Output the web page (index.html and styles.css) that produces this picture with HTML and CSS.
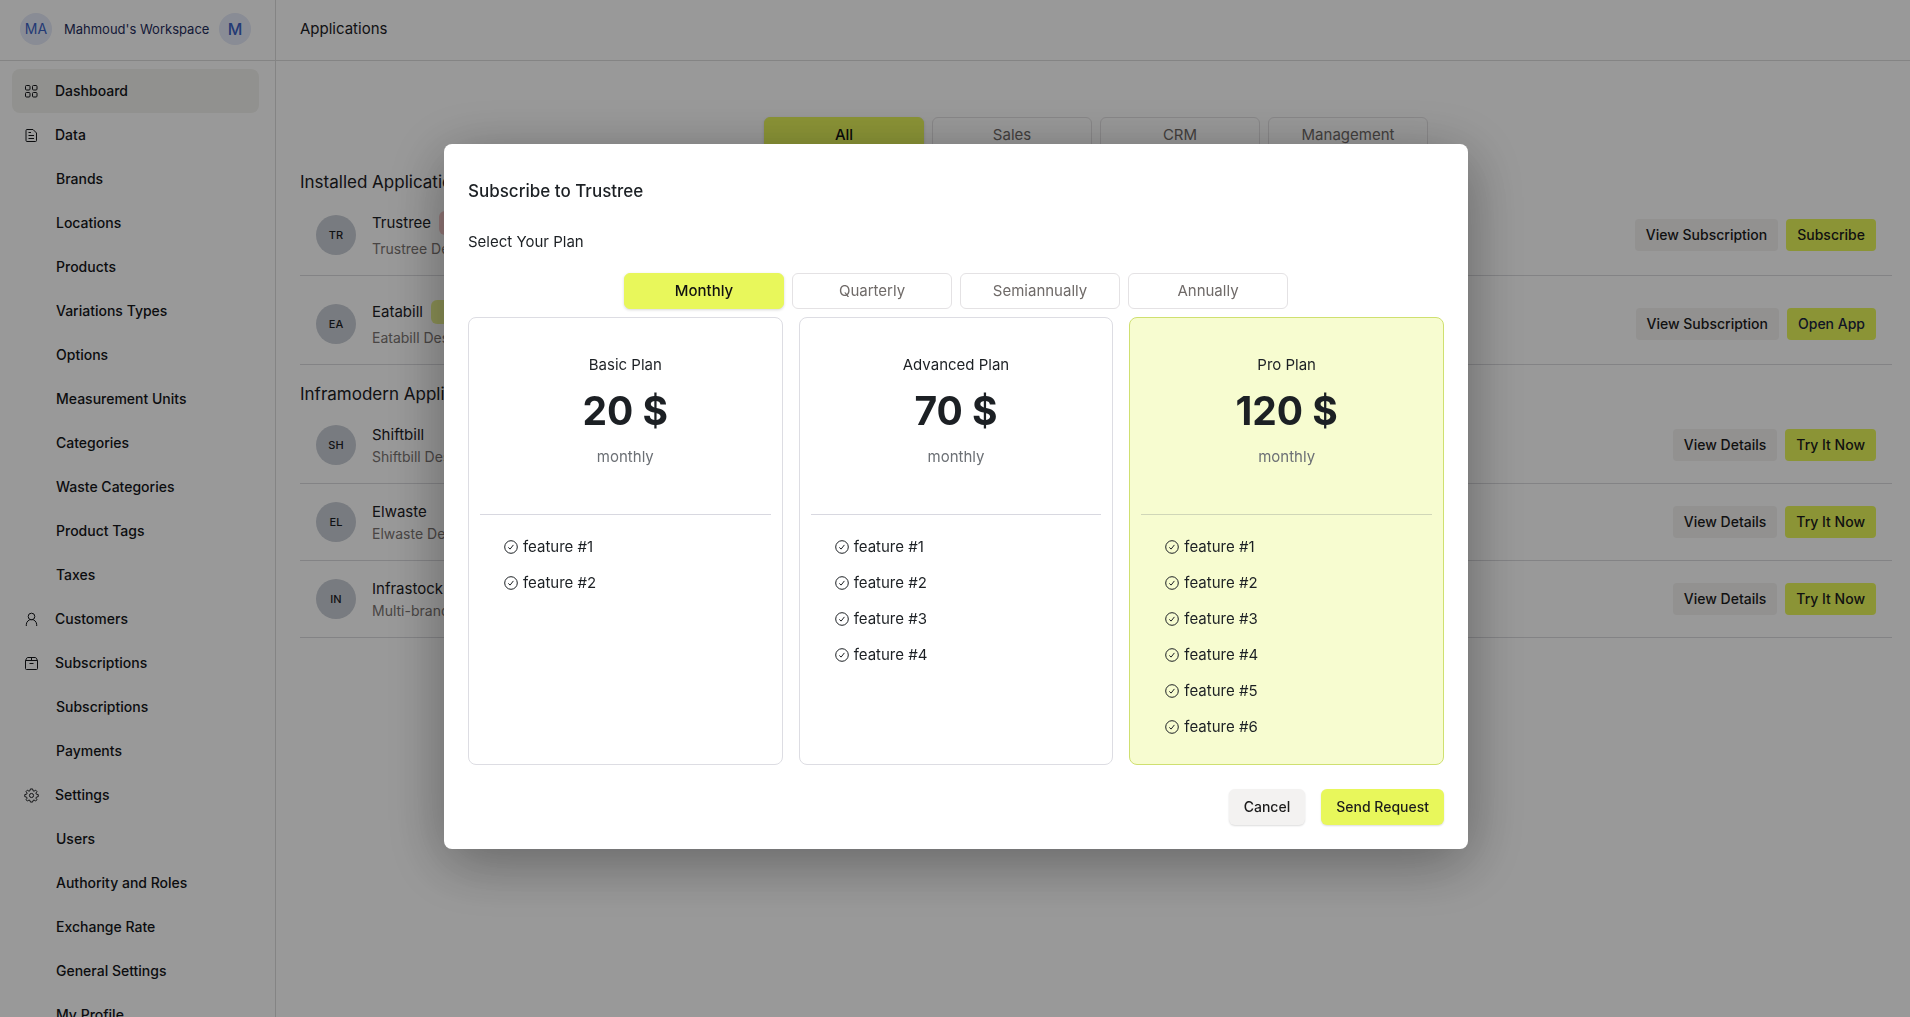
FILE: index.html
```html
<!DOCTYPE html>
<html lang="en">
<head>
<meta charset="utf-8">
<title>Applications</title>
<link rel="stylesheet" href="styles.css">
</head>
<body>
<svg class="sprite" aria-hidden="true">
  <symbol id="check" viewBox="0 0 14 14"><circle cx="7" cy="7" r="6.3"/><path d="M4.3 7.4l1.8 1.7 3.3-4.2"/></symbol>
</svg>
<div class="app">
  <aside class="sidebar">
    <div class="workspace">
      <span class="chip">MA</span>
      <span class="workspace-name">Mahmoud's Workspace</span>
      <span class="chip chip-large">M</span>
    </div>
    <nav class="menu">
      <a href="#" class="item active"><svg viewBox="0 0 15 15"><rect x="1.500" y="1.500" width="4.500" height="4.500" rx="1"/><rect x="8.500" y="1.500" width="4.500" height="4.500" rx="1"/><rect x="1.500" y="8.500" width="4.500" height="4.500" rx="1"/><rect x="8.500" y="8.500" width="4.500" height="4.500" rx="1"/></svg>Dashboard</a>
      <a href="#" class="item"><svg viewBox="0 0 15 15"><path d="M3 1.500h6L12.500 5v7.500a1 1 0 0 1-1 1H3a1 1 0 0 1-1-1v-10a1 1 0 0 1 1-1zM4.500 4.500H7M4.500 7.500H10M4.500 10.500H10"/></svg>Data</a>
      <a href="#" class="item child">Brands</a>
      <a href="#" class="item child">Locations</a>
      <a href="#" class="item child">Products</a>
      <a href="#" class="item child">Variations Types</a>
      <a href="#" class="item child">Options</a>
      <a href="#" class="item child">Measurement Units</a>
      <a href="#" class="item child">Categories</a>
      <a href="#" class="item child">Waste Categories</a>
      <a href="#" class="item child">Product Tags</a>
      <a href="#" class="item child">Taxes</a>
      <a href="#" class="item"><svg viewBox="0 0 15 15"><circle cx="7.500" cy="4.500" r="3.300"/><path d="M2.300 14v-1.300a5.200 5.200 0 0 1 10.400 0V14"/></svg>Customers</a>
      <a href="#" class="item"><svg viewBox="0 0 15 15"><path d="M1.500 4.500v8a1 1 0 0 0 1 1h10a1 1 0 0 0 1-1v-8L12.200 2.100a1 1 0 0 0-.9-.6H3.700a1 1 0 0 0-.9.600zM1.500 4.500h12M7.500 1.500v3M5.500 7.500h4"/></svg>Subscriptions</a>
      <a href="#" class="item child">Subscriptions</a>
      <a href="#" class="item child">Payments</a>
      <a href="#" class="item"><svg viewBox="0 0 16 16"><circle cx="8" cy="8" r="2.200"/><path d="M6.800 1h2.400l.4 1.900 1.100.5 1.700-1.100 1.400 1.400-1.100 1.800.5 1.100 2 .4v2.200l-2 .5-.5 1.100 1.100 1.700-1.400 1.400-1.700-1.100-1.100.5L9.200 15H6.800l-.4-1.700-1.100-.5-1.700 1.100-1.400-1.400 1.100-1.700-.5-1.100-2-.5V7l2-.4.5-1.100-1.100-1.800 1.400-1.400 1.700 1.100 1.100-.5z"/></svg>Settings</a>
      <a href="#" class="item child">Users</a>
      <a href="#" class="item child">Authority and Roles</a>
      <a href="#" class="item child">Exchange Rate</a>
      <a href="#" class="item child">General Settings</a>
      <a href="#" class="item child">My Profile</a>
    </nav>
  </aside>
  <div class="page">
    <header class="topbar"><h1>Applications</h1></header>
    <main class="content">
      <div class="tabs">
        <button class="tab selected">All</button>
        <button class="tab">Sales</button>
        <button class="tab">CRM</button>
        <button class="tab">Management</button>
      </div>
      <section class="group installed">
        <h2>Installed Applications</h2>
        <article class="row">
          <span class="avatar">TR</span>
          <div class="info"><h3>Trustree <span class="badge danger"></span></h3><p>Trustree Description</p></div>
          <button class="btn small">View Subscription</button>
          <button class="btn small lime">Subscribe</button>
        </article>
        <article class="row">
          <span class="avatar">EA</span>
          <div class="info"><h3>Eatabill <span class="badge"></span></h3><p>Eatabill Description</p></div>
          <button class="btn small">View Subscription</button>
          <a href="#" class="btn small lime open">Open App</a>
        </article>
      </section>
      <section class="group">
        <h2>Inframodern Applications</h2>
        <article class="row">
          <span class="avatar">SH</span>
          <div class="info"><h3>Shiftbill</h3><p>Shiftbill Description</p></div>
          <button class="btn small">View Details</button>
          <button class="btn small lime">Try It Now</button>
        </article>
        <article class="row">
          <span class="avatar">EL</span>
          <div class="info"><h3>Elwaste</h3><p>Elwaste Description</p></div>
          <button class="btn small">View Details</button>
          <button class="btn small lime">Try It Now</button>
        </article>
        <article class="row">
          <span class="avatar">IN</span>
          <div class="info"><h3>Infrastock</h3><p>Multi-brand</p></div>
          <button class="btn small">View Details</button>
          <button class="btn small lime">Try It Now</button>
        </article>
      </section>
    </main>
  </div>
</div>
<div class="overlay">
  <div class="modal" role="dialog" aria-modal="true" aria-labelledby="modal-title">
    <h2 id="modal-title">Subscribe to Trustree</h2>
    <p class="lead">Select Your Plan</p>
    <div class="tabs">
      <button class="tab selected">Monthly</button>
      <button class="tab">Quarterly</button>
      <button class="tab">Semiannually</button>
      <button class="tab">Annually</button>
    </div>
    <div class="plans">
      <section class="plan">
        <div class="plan-head"><h3>Basic Plan</h3><strong>20 $</strong><span>monthly</span></div>
        <ul>
          <li><svg><use href="#check"/></svg>feature #1</li>
          <li><svg><use href="#check"/></svg>feature #2</li>
        </ul>
      </section>
      <section class="plan">
        <div class="plan-head"><h3>Advanced Plan</h3><strong>70 $</strong><span>monthly</span></div>
        <ul>
          <li><svg><use href="#check"/></svg>feature #1</li>
          <li><svg><use href="#check"/></svg>feature #2</li>
          <li><svg><use href="#check"/></svg>feature #3</li>
          <li><svg><use href="#check"/></svg>feature #4</li>
        </ul>
      </section>
      <section class="plan chosen">
        <div class="plan-head"><h3>Pro Plan</h3><strong>120 $</strong><span>monthly</span></div>
        <ul>
          <li><svg><use href="#check"/></svg>feature #1</li>
          <li><svg><use href="#check"/></svg>feature #2</li>
          <li><svg><use href="#check"/></svg>feature #3</li>
          <li><svg><use href="#check"/></svg>feature #4</li>
          <li><svg><use href="#check"/></svg>feature #5</li>
          <li><svg><use href="#check"/></svg>feature #6</li>
        </ul>
      </section>
    </div>
    <div class="actions">
      <button class="btn raised">Cancel</button>
      <button class="btn raised lime">Send Request</button>
    </div>
  </div>
</div>
</body>
</html>
```
FILE: styles.css
```css
* { box-sizing: border-box; }
body, h1, h2, h3, p, ul { margin: 0; padding: 0; }
body {
  font-family: Inter, "Liberation Sans", sans-serif;
  font-size: 15px;
  line-height: 24px;
  color: #1c2024;
  background: #fff;
  overflow: hidden;
}
h1, h2, h3 { font-weight: 400; }
h1, h3 { font-size: 15px; }
button { font: inherit; cursor: pointer; }
a { color: inherit; text-decoration: none; }
svg { fill: none; stroke: currentColor; flex: none; }
.sprite { display: none; }

.app { display: flex; height: 100vh; }
.sidebar { flex: none; width: 276px; border-right: 1px solid #dcdcdc; overflow: hidden; }
.workspace {
  display: flex;
  align-items: center;
  height: 61px;
  padding: 0 0 3px 20px;
  border-bottom: 1px solid #dcdcdc;
  font-size: 14px;
  color: #1f2d5c;
}
.workspace-name { width: 155px; padding-left: 12px; font-size: 13px; white-space: nowrap; }
.chip {
  flex: none;
  width: 32px;
  height: 32px;
  border-radius: 50%;
  background: #e4e9f8;
  color: #3b62c4;
  line-height: 32px;
  text-align: center;
}
.chip-large { margin-left: 12px; font-size: 16px; font-weight: 500; }

.menu { padding: 8px 16px 0 12px; }
.item {
  display: flex;
  align-items: center;
  gap: 16px;
  height: 44px;
  padding-left: 12px;
  border-radius: 8px;
  font-size: 14px;
  font-weight: 500;
  color: #14161a;
}
.item svg { width: 15px; height: 15px; }
.item.active { background: #f2f2ee; }
.item.child { padding-left: 44px; }

.page { flex: 1; min-width: 0; }
.topbar {
  display: flex;
  align-items: center;
  height: 61px;
  padding: 0 24px 2px;
  border-bottom: 1px solid #dcdcdc;
}
.content { padding: 56px 18px 0 24px; }

.tabs { display: flex; justify-content: center; gap: 8px; }
.tab {
  width: 160px;
  height: 36px;
  border: 1px solid #e4e2e4;
  border-radius: 6px;
  background: #fff;
  color: #6f6a68;
}
.tab.selected {
  border-color: #e8f75b;
  background: #e8f75b;
  color: #111;
  font-weight: 500;
  box-shadow: 0 1px 3px rgba(0, 0, 0, 0.16);
}

.group { padding-top: 16px; }
.group h2 { font-size: 17px; line-height: 26px; }
.row {
  display: flex;
  align-items: center;
  gap: 8px;
  min-height: 77px;
  padding: 0 16px;
  border-bottom: 1px solid #dadade;
}
.installed .row { min-height: 81px; }
.installed .row + .row { margin-top: 8px; }
.avatar {
  width: 40px;
  height: 40px;
  margin-right: 8px;
  border-radius: 50%;
  background: #c8cdd5;
  font-size: 11px;
  font-weight: 500;
  line-height: 40px;
  text-align: center;
}
.info { flex: 1; }
.info h3 { display: flex; gap: 8px; }
.info p { font-size: 14px; line-height: 20px; color: #7a7472; }
.installed .info h3 { margin-bottom: 4px; }
.badge { width: 56px; height: 24px; border-radius: 6px; background: #e9f28f; }
.badge.danger { background: #f5c8c8; }

.btn {
  height: 36px;
  padding: 0 15px;
  border: 0;
  border-radius: 6px;
  background: #f3f2f1;
  color: #1c1c1c;
  font-size: 14px;
  font-weight: 500;
}
.btn.small { height: 32px; padding: 0 11px; border-radius: 4px; line-height: 32px; }
.btn.lime { background: #e8f75b; }
.btn.open { color: #1a2540; }
.btn.raised { box-shadow: 0 1px 2px rgba(0, 0, 0, 0.14); }

.overlay {
  position: fixed;
  inset: 0;
  display: flex;
  align-items: center;
  justify-content: center;
  padding: 0 0 24px 2px;
  background: rgba(0, 0, 0, 0.4);
}
.modal {
  width: 1024px;
  padding: 24px;
  border-radius: 8px;
  background: #fff;
  box-shadow: 0 12px 60px rgba(0, 0, 0, 0.3), 0 16px 64px rgba(0, 0, 40, 0.08);
}
.modal h2 { padding: 9px 0 7px; font-size: 17px; font-weight: 500; line-height: 28px; }
.lead { margin: 18px 0 19px; }

.plans { display: grid; grid-template-columns: repeat(3, 1fr); gap: 16px; margin-top: 8px; }
.plan {
  min-height: 448px;
  padding: 0 11px 19px;
  border: 1px solid #dddde3;
  border-radius: 8px;
}
.plan.chosen { border-color: #cfe070; background: #f7fcd0; }
.plan-head {
  display: flex;
  flex-direction: column;
  align-items: center;
  height: 197px;
  padding-top: 35px;
  border-bottom: 1px solid #d8d8e0;
}
.chosen .plan-head { border-color: #d0d6b8; }
.plan-head strong { margin: 12px 0; font-size: 39px; font-weight: 700; line-height: 44px; }
.plan-head span { color: #6c7075; }
.plan ul { padding: 14px 24px 0; list-style: none; }
.plan li { display: flex; align-items: center; gap: 5px; height: 36px; }
.plan li svg { width: 14px; height: 14px; }

.actions { display: flex; justify-content: flex-end; gap: 16px; margin-top: 24px; }
```
